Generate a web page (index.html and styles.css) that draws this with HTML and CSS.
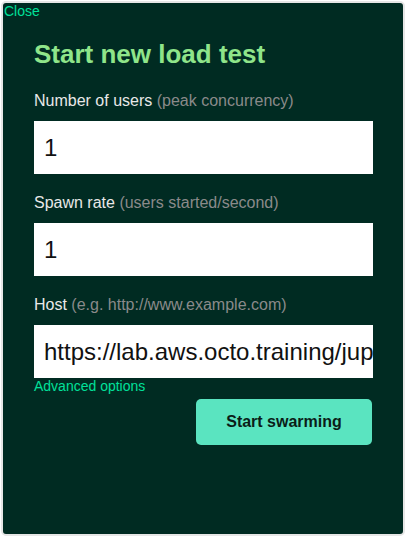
FILE: index.html
```html
<!DOCTYPE html>
<html>
<head>
<meta charset="utf-8">
<link rel="stylesheet" href="styles.css">
</head>
<body>
<div class="modal">
  <a class="close" href="#">Close</a>
  <div class="content">
    <h2 class="title">Start new load test</h2>
    <form class="form">
      <label class="label">Number of users <span class="hint">(peak concurrency)</span></label>
      <input class="input" type="text" value="1">
      <label class="label">Spawn rate <span class="hint">(users started/second)</span></label>
      <input class="input" type="text" value="1">
      <label class="label">Host <span class="hint">(e.g. http://www.example.com)</span></label>
      <input class="input" type="text" value="https://lab.aws.octo.training/jupyter">
      <a class="advanced" href="#">Advanced options</a>
      <div class="actions">
        <button class="submit" type="button">Start swarming</button>
      </div>
    </form>
  </div>
</div>
</body>
</html>
```
FILE: styles.css
```css
html, body {
  margin: 0;
  padding: 0;
  height: 100%;
  background: #ffffff;
  font-family: "Liberation Sans", Arial, sans-serif;
}
.modal {
  box-sizing: border-box;
  margin: 1px;
  height: 535px;
  border: 2px solid #e6e6e6;
  border-radius: 5px;
  background: #002b22;
  position: relative;
}
.close {
  position: absolute;
  left: 1px;
  top: 0px;
  font-size: 14px;
  color: #00e09a;
  text-decoration: none;
}
.content {
  padding: 36px 29px 0 31px;
}
.title {
  margin: 0;
  font-size: 26px;
  font-weight: bold;
  color: #8fe58a;
  line-height: 30px;
}
.form {
  display: flex;
  flex-direction: column;
  margin-top: 23px;
}
.label {
  font-size: 16px;
  color: #e8e8e8;
  line-height: 18px;
  margin-bottom: 11px;
}
.hint {
  color: #8a8a8a;
}
.input {
  box-sizing: border-box;
  width: 339px;
  height: 53px;
  border: none;
  outline: none;
  padding: 0 0 0 10px;
  font-family: "Liberation Sans", Arial, sans-serif;
  font-size: 24px;
  color: #111;
  background: #fff;
  margin-bottom: 20px;
}
.input:last-of-type {
  margin-bottom: 0;
}
.advanced {
  font-size: 14px;
  color: #00e09a;
  text-decoration: none;
  line-height: 16px;
  margin-top: 0;
}
.actions {
  display: flex;
  justify-content: flex-end;
  width: 338px;
  margin-top: 5px;
}
.submit {
  width: 176px;
  height: 46px;
  border: none;
  border-radius: 5px;
  background: #5ae4c0;
  color: #0b1d18;
  font-family: "Liberation Sans", Arial, sans-serif;
  font-size: 16px;
  font-weight: bold;
}
```
